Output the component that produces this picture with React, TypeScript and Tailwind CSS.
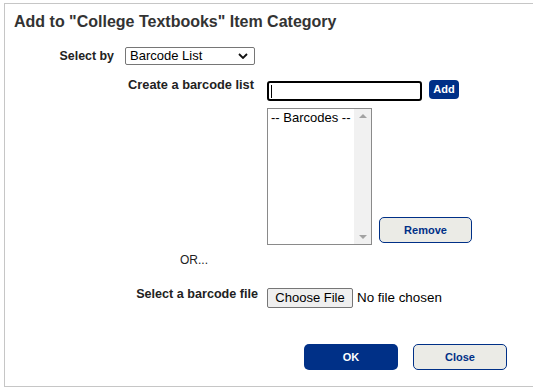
export default function App() {
  return (
    <div className="h-[389px] w-[533px] overflow-hidden bg-white font-['Liberation_Sans',Arial,sans-serif] text-[#222]">
      <div className="ml-[4px] mt-[3px] h-[384px] w-[560px] border border-[#c6c6c6] pl-[9px] pt-[9px]">
        <h1 className="text-[16px] font-bold leading-[18px] text-[#333]">
          Add to "College Textbooks" Item Category
        </h1>

        {/* select by */}
        <div className="mt-[16px] flex h-[18px] items-center">
          <span className="w-[100px] text-right text-[12.4px] font-bold leading-[14px]">Select by</span>
          <div className="ml-[11px] flex h-[18px] w-[130px] items-center rounded-[2px] border border-[#767676] pl-[4px] pr-[6px] text-[13px] leading-[16px] text-black">
            <span className="flex-1">Barcode List</span>
            <svg viewBox="0 0 10 6" className="h-[6px] w-[10px]" fill="none" stroke="#111" strokeWidth="1.8">
              <path d="M1 1l4 4 4-4" />
            </svg>
          </div>
        </div>

        {/* barcode list */}
        <div className="mt-[13px] flex items-start">
          <span className="w-[240px] text-right text-[12.8px] font-bold leading-[14px]">Create a barcode list</span>
          <div className="ml-[13px] flex flex-col pt-[3px]">
            <div className="flex items-start">
              <div className="flex h-[20px] w-[155px] items-center rounded-[3px] border-2 border-black pl-[2px]">
                <span className="h-[13px] w-px bg-black" />
              </div>
              <button className="ml-[7px] -mt-[1px] h-[19px] w-[30px] rounded-[4px] bg-[#003087] text-[11px] font-bold leading-none text-white">
                Add
              </button>
            </div>
            <div className="mt-[7px] flex items-end">
              <div className="flex h-[137px] w-[105px] border border-[#8a8a8a]">
                <div className="flex-1 pl-[3px] pt-[1px] text-[13px] leading-[16px] text-black">-- Barcodes --</div>
                <div className="flex w-[17px] flex-col items-center justify-between bg-[#f1f1f1] py-[5px]">
                  <svg viewBox="0 0 8 4" className="h-[4px] w-[8px]" fill="#a3a3a3">
                    <path d="M0 4L4 0l4 4z" />
                  </svg>
                  <svg viewBox="0 0 8 4" className="h-[4px] w-[8px]" fill="#a3a3a3">
                    <path d="M0 0h8L4 4z" />
                  </svg>
                </div>
              </div>
              <button className="mb-[2px] ml-[7px] h-[26px] w-[93px] rounded-[5px] border border-[#003087] bg-[#ebebe6] text-[11px] font-bold text-[#003087]">
                Remove
              </button>
            </div>
          </div>
        </div>

        <p className="ml-[166px] mt-[8px] text-[12px] leading-[14px]">OR...</p>

        {/* barcode file */}
        <div className="mt-[20px] flex items-start">
          <span className="w-[244px] text-right text-[12.6px] font-bold leading-[14px]">Select a barcode file</span>
          <div className="ml-[9px] mt-[1px] flex items-center">
            <span className="flex h-[20px] w-[86px] items-center justify-center rounded-[2px] border border-[#767676] bg-[#efefef] text-[13px] text-black">
              Choose File
            </span>
            <span className="ml-[4px] text-[13.4px] text-black">No file chosen</span>
          </div>
        </div>

        <div className="ml-[290px] mt-[36px] flex">
          <button className="h-[26px] w-[94px] rounded-[5px] bg-[#003087] text-[11px] font-bold text-white">OK</button>
          <button className="ml-[15px] h-[26px] w-[94px] rounded-[5px] border border-[#003087] bg-[#ebebe6] text-[11px] font-bold text-[#003087]">
            Close
          </button>
        </div>
      </div>
    </div>
  );
}
